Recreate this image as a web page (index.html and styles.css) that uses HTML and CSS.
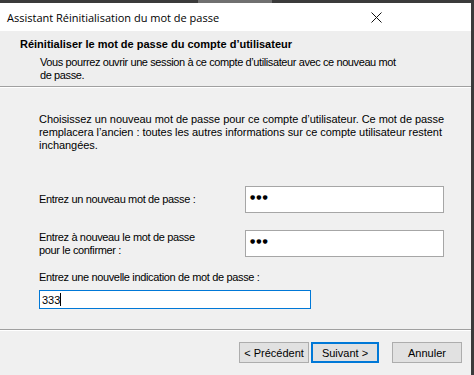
FILE: index.html
```html
<!DOCTYPE html>
<html lang="fr">
<head>
  <meta charset="UTF-8">
  <meta name="viewport" content="width=device-width, initial-scale=1.0">
  <title>Assistant Réinitialisation du mot de passe</title>
  <link rel="stylesheet" href="styles.css">
</head>
<body>
  <div class="window">
    <div class="titlebar">
      <span class="title">Assistant Réinitialisation du mot de passe</span>
      <svg class="close" width="11" height="11" viewBox="0 0 11 11">
        <path d="M0.5 0.5 L10.5 10.5 M10.5 0.5 L0.5 10.5" stroke="#111" stroke-width="1" fill="none"/>
      </svg>
    </div>

    <div class="header">
      <h1>Réinitialiser le mot de passe du compte d’utilisateur</h1>
      <p>Vous pourrez ouvrir une session à ce compte d’utilisateur avec ce nouveau mot<br>de passe.</p>
    </div>

    <div class="content">
      <p class="intro">Choisissez un nouveau mot de passe pour ce compte d’utilisateur. Ce mot de passe<br>remplacera l’ancien : toutes les autres informations sur ce compte utilisateur restent<br>inchangées.</p>

      <div class="field first">
        <label>Entrez un nouveau mot de passe :</label>
        <div class="box"><span class="dots">●●●</span></div>
      </div>

      <div class="field second">
        <label>Entrez à nouveau le mot de passe<br>pour le confirmer :</label>
        <div class="box"><span class="dots">●●●</span></div>
      </div>

      <div class="hint">
        <label>Entrez une nouvelle indication de mot de passe :</label>
        <div class="box focused">333<span class="caret"></span></div>
      </div>
    </div>

    <div class="footer">
      <button class="btn">&lt; Précédent</button>
      <button class="btn default">Suivant &gt;</button>
      <button class="btn cancel">Annuler</button>
    </div>
  </div>
</body>
</html>
```

FILE: styles.css
```css
body {
  margin: 0;
  padding: 0;
  background-color: #3b3b3b;
  background-image: linear-gradient(90deg, #3b3b3b 198px, #707070 198px, #707070 272px, #3b3b3b 272px);
  font-family: 'Liberation Sans', Arial, sans-serif;
  overflow: hidden;
}

.window {
  width: 471px;
  height: 372px;
  margin-top: 3px;
  background-color: #f0f0f0;
  display: flex;
  flex-direction: column;
  color: #000;
}

.titlebar {
  height: 28px;
  background-color: #ffffff;
  display: flex;
  align-items: center;
  justify-content: space-between;
  padding: 0 89px 0 7px;
  flex-shrink: 0;
}

.title {
  font-family: 'Open Sans', sans-serif;
  font-size: 11px;
  color: #000;
}

.close {
  margin-top: 1px;
}

.header {
  height: 56px;
  flex-shrink: 0;
  background-color: #eeeeee;
  padding: 6px 0 0 20px;
  box-sizing: border-box;
  border-bottom: 1px solid #a0a0a0;
  box-shadow: 0 1px 0 #ffffff;
}

.header h1 {
  margin: 0;
  font-size: 11px;
  font-weight: bold;
  line-height: 14px;
}

.header p {
  margin: 5px 0 0 20px;
  font-size: 11px;
  line-height: 13px;
  letter-spacing: -0.4px;
}

.content {
  flex: 1;
  padding: 25px 0 0 39px;
  margin-top: 1px;
  font-size: 11px;
}

.intro {
  margin: 0;
  line-height: 13px;
  letter-spacing: -0.05px;
}

.field {
  display: flex;
  align-items: center;
  width: 405px;
  justify-content: space-between;
}

.field label {
  line-height: 13px;
  letter-spacing: -0.35px;
}

.field.first {
  margin-top: 34px;
}

.field.second {
  margin-top: 17px;
}

.box {
  width: 193px;
  height: 25px;
  background-color: #ffffff;
  border: 1px solid #a6a6a6;
  display: flex;
  align-items: center;
  padding-left: 4px;
  box-sizing: content-box;
}

.dots {
  font-family: 'DejaVu Sans', sans-serif;
  font-size: 6px;
  letter-spacing: 1px;
  margin-top: -6px;
}

.hint {
  margin-top: 14px;
}

.hint label {
  display: block;
  line-height: 13px;
  margin-bottom: 6px;
  letter-spacing: -0.35px;
}

.box.focused {
  width: 268px;
  height: 17px;
  border-color: #0078d7;
  padding-left: 2px;
  font-size: 11px;
}

.caret {
  display: inline-block;
  width: 1px;
  height: 13px;
  background-color: #000;
}

.footer {
  height: 46px;
  flex-shrink: 0;
  border-top: 1px solid #a0a0a0;
  box-shadow: inset 0 1px 0 #ffffff;
  display: flex;
  align-items: center;
  padding-left: 239px;
  box-sizing: border-box;
}

.btn {
  font-family: 'Liberation Sans', Arial, sans-serif;
  font-size: 11px;
  width: 70px;
  height: 21px;
  background-color: #e1e1e1;
  border: 1px solid #adadad;
  margin: 0;
  padding: 0;
  color: #000;
}

.btn.default {
  border: 2px solid #0078d7;
  margin-left: 2px;
  width: 68px;
}

.btn.cancel {
  margin-left: 13px;
}
```
